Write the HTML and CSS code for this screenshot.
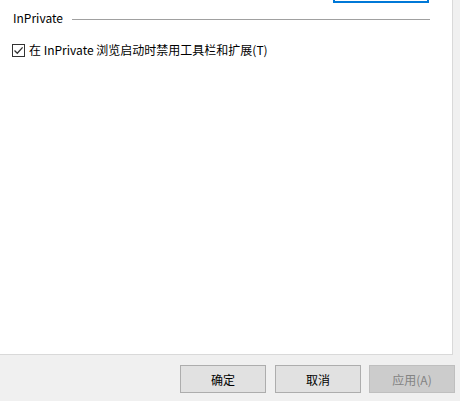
FILE: index.html
```html
<!DOCTYPE html>
<html lang="zh-CN">
<head>
<meta charset="utf-8">
<title>Internet 选项</title>
<link rel="stylesheet" href="styles.css">
</head>
<body>
<div class="panel">
  <div class="prev-row"><div class="prev-btn"></div></div>
  <div class="group-title">
    <span class="group-label">InPrivate</span>
    <span class="group-line"></span>
  </div>
  <label class="check-row">
    <span class="checkbox">
      <svg width="11" height="11" viewBox="0 0 11 11"><path d="M1.5 5.5 L4.3 8.3 L9.6 2.4" fill="none" stroke="#333" stroke-width="1.3"/></svg>
    </span>
    <span class="check-text">在 InPrivate 浏览启动时禁用工具栏和扩展(T)</span>
  </label>
</div>
<div class="buttons">
  <button class="btn">确定</button>
  <button class="btn">取消</button>
  <button class="btn disabled">应用(A)</button>
</div>
</body>
</html>
```
FILE: styles.css
```css
html, body {
  margin: 0;
  padding: 0;
}
body {
  width: 460px;
  height: 401px;
  overflow: hidden;
  background: #f0f0f0;
  font-family: "Noto Sans CJK SC", "Microsoft YaHei", sans-serif;
  font-size: 12px;
  color: #000;
}
.panel {
  box-sizing: border-box;
  width: 453px;
  height: 355px;
  background: #fff;
  border-right: 1px solid #d9d9d9;
  border-bottom: 1px solid #d9d9d9;
  display: flex;
  flex-direction: column;
}
.prev-row {
  display: flex;
  padding-left: 333px;
}
.prev-btn {
  box-sizing: border-box;
  width: 96px;
  height: 3px;
  border: 2px solid #0078d7;
  border-top: none;
  background: #fff;
}
.group-title {
  display: flex;
  align-items: center;
  margin-top: 6px;
  padding-left: 13px;
  padding-right: 22px;
  height: 18px;
}
.group-label {
  line-height: 18px;
}
.group-line {
  flex: 1;
  margin-left: 9px;
  height: 1px;
  background: #a0a0a0;
  margin-top: 3px;
}
.check-row {
  display: flex;
  align-items: center;
  margin-top: 14px;
  padding-left: 12px;
  height: 18px;
}
.checkbox {
  box-sizing: border-box;
  width: 13px;
  height: 13px;
  border: 1px solid #333;
  display: flex;
  align-items: center;
  justify-content: center;
  background: #fff;
}
.check-text {
  margin-left: 4px;
  line-height: 18px;
}
.buttons {
  display: flex;
  justify-content: flex-end;
  gap: 9px;
  padding: 10px 5px 0 0;
}
.btn {
  box-sizing: border-box;
  width: 86px;
  height: 28px;
  background: #e1e1e1;
  border: 1px solid #adadad;
  font-family: inherit;
  font-size: 12px;
  color: #000;
  padding: 0;
  margin: 0;
}
.btn.disabled {
  margin-left: -1px;
  background: #cccccc;
  border-color: #bfbfbf;
  color: #838383;
}
```
